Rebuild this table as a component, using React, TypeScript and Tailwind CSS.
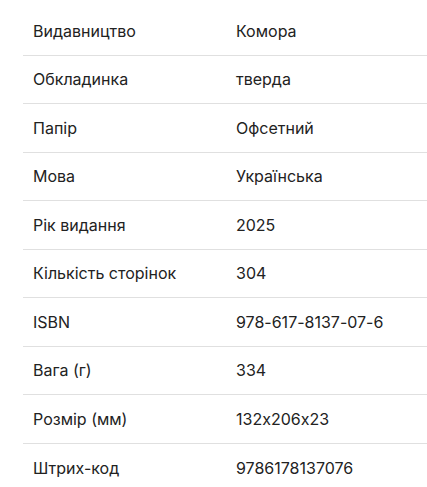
import React from "react";

const rows: [string, string][] = [
  ["Видавництво", "Комора"],
  ["Обкладинка", "тверда"],
  ["Папір", "Офсетний"],
  ["Мова", "Українська"],
  ["Рік видання", "2025"],
  ["Кількість сторінок", "304"],
  ["ISBN", "978-617-8137-07-6"],
  ["Вага (г)", "334"],
  ["Розмір (мм)", "132x206x23"],
  ["Штрих-код", "9786178137076"],
];

export default function App() {
  return (
    <div className="bg-white w-[427px] h-[487px] overflow-hidden pl-[23px] pt-[7px] [font-feature-settings:'calt'_0]" style={{ fontFamily: "Inter, 'Noto Sans', sans-serif" }}>
      <div className="flex flex-col">
        {rows.map(([k, v], i) => (
          <div
            key={k}
            className={`flex items-center h-[48.5px] text-[16px] text-[#222222] ${i < rows.length - 1 ? "border-b border-[#e0e0e0]" : ""}`}
          >
            <div className="w-[213px] pl-[10px]">{k}</div>
            <div>{v}</div>
          </div>
        ))}
      </div>
    </div>
  );
}
